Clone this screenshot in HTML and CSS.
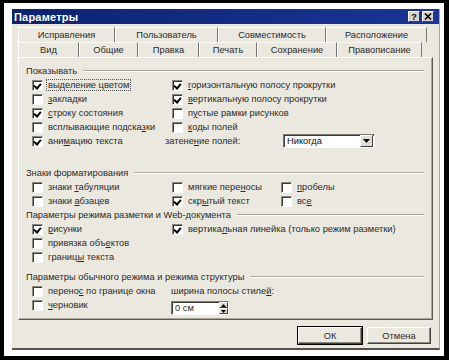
FILE: index.html
```html
<!DOCTYPE html>
<html lang="ru">
<head>
  <meta charset="UTF-8" />
  <title>Параметры</title>
  <link rel="stylesheet" href="styles.css">
</head>
<body>
  <div class="screen">
    <div class="dialog">
      <div class="titlebar">
        <span class="title">Параметры</span>
        <div class="tb-btns">
          <span class="tb-btn">?</span>
          <span class="tb-btn">
            <svg width="8" height="7" viewBox="0 0 8 7"><path d="M1 0.5 L7 6.5 M7 0.5 L1 6.5" stroke="#000" stroke-width="1.6"/></svg>
          </span>
        </div>
      </div>

      <!-- вкладки -->
      <div class="tabs">
        <div class="tab-row back">
          <span class="tab w97">Исправления</span>
          <span class="tab w103">Пользователь</span>
          <span class="tab w108">Совместимость</span>
          <span class="tab w101">Расположение</span>
        </div>
        <div class="tab-row front">
          <span class="tab active w61">Вид</span>
          <span class="tab w59">Общие</span>
          <span class="tab w61">Правка</span>
          <span class="tab w58">Печать</span>
          <span class="tab w80">Сохранение</span>
          <span class="tab w85">Правописание</span>
        </div>
      </div>

      <div class="panel">
        <div class="group-title first"><span>Показывать</span></div>
        <div class="row">
          <label class="opt col1"><i class="cb on"></i><span class="focus">выделение цветом</span></label>
          <label class="opt"><i class="cb on"></i><span><u>г</u>оризонтальную полосу прокрутки</span></label>
        </div>
        <div class="row">
          <label class="opt col1"><i class="cb"></i><span><u>з</u>акладки</span></label>
          <label class="opt"><i class="cb on"></i><span><u>в</u>ертикальную полосу прокрутки</span></label>
        </div>
        <div class="row">
          <label class="opt col1"><i class="cb on"></i><span><u>с</u>троку состояния</span></label>
          <label class="opt"><i class="cb"></i><span>п<u>у</u>стые рамки рисунков</span></label>
        </div>
        <div class="row">
          <label class="opt col1"><i class="cb"></i><span>всплывающие подска<u>з</u>ки</span></label>
          <label class="opt"><i class="cb"></i><span><u>к</u>оды полей</span></label>
        </div>
        <div class="row">
          <label class="opt col1"><i class="cb on"></i><span>ани<u>м</u>ацию текста</span></label>
          <span class="shade-label">затене<u>н</u>ие полей:</span>
          <div class="select"><span>Никогда</span><i class="drop"><svg width="7" height="4" viewBox="0 0 7 4"><path d="M0 0 H7 L3.5 4 Z" fill="#000"/></svg></i></div>
        </div>

        <div class="group-title second"><span>Знаки форматирования</span></div>
        <div class="row">
          <label class="opt col1"><i class="cb"></i><span>знаки <u>т</u>абуляции</span></label>
          <label class="opt col2"><i class="cb"></i><span>мягкие пере<u>н</u>осы</span></label>
          <label class="opt"><i class="cb"></i><span><u>п</u>робелы</span></label>
        </div>
        <div class="row">
          <label class="opt col1"><i class="cb"></i><span>знаки <u>а</u>бзацев</span></label>
          <label class="opt col2"><i class="cb on"></i><span>скр<u>ы</u>тый текст</span></label>
          <label class="opt"><i class="cb"></i><span>вс<u>е</u></span></label>
        </div>

        <div class="group-title third"><span>Параметры режима разметки и Web-документа</span></div>
        <div class="row">
          <label class="opt col1"><i class="cb on"></i><span><u>р</u>исунки</span></label>
          <label class="opt"><i class="cb on"></i><span>вертика<u>л</u>ьная линейка (только режим разметки)</span></label>
        </div>
        <div class="row">
          <label class="opt col1"><i class="cb"></i><span>привязка объ<u>е</u>ктов</span></label>
        </div>
        <div class="row">
          <label class="opt col1"><i class="cb"></i><span>границ<u>ы</u> текста</span></label>
        </div>

        <div class="group-title fourth"><span>Параметры обычного режима и режима структуры</span></div>
        <div class="row">
          <label class="opt col1"><i class="cb"></i><span>перено<u>с</u> по границе окна</span></label>
          <span class="width-label">ширина полосы стиле<u>й</u>:</span>
        </div>
        <div class="row">
          <label class="opt col1"><i class="cb"></i><span><u>ч</u>ерновик</span></label>
          <div class="spin">
            <span>0 см</span>
            <i class="spin-btns">
              <b><svg width="5" height="3" viewBox="0 0 5 3"><path d="M0 3 H5 L2.5 0 Z" fill="#000"/></svg></b>
              <b><svg width="5" height="3" viewBox="0 0 5 3"><path d="M0 0 H5 L2.5 3 Z" fill="#000"/></svg></b>
            </i>
          </div>
        </div>
      </div>

      <div class="buttons">
        <button class="btn default">ОК</button>
        <button class="btn">Отмена</button>
      </div>
    </div>
  </div>
</body>
</html>
```

FILE: styles.css
```css
body {
  margin: 0;
  background-color: #000;
  font-family: "Liberation Sans", Arial, sans-serif;
  font-size: 9.3px;
  color: #2a2a2a;
}

.screen {
  width: 428px;
  height: 341px;
  margin: 3px 0 0 4px;
  padding: 6px 4px 6px 8px;
  background-color: #fff;
}

.dialog {
  width: 428px;
  height: 341px;
  box-sizing: border-box;
  background-color: #ebe8e0;
  border-bottom: 2px solid #55534c;
  border-right: 1px solid #a9a69c;
}

/* заголовок окна */
.titlebar {
  height: 15px;
  background: linear-gradient(to right, #0b2370, #1a3596);
  display: flex;
  align-items: center;
  justify-content: space-between;
  padding: 0 5px 0 2px;
}

.title {
  color: #fff;
  font-weight: bold;
  font-size: 11px;
  letter-spacing: 0.2px;
}

.tb-btns {
  display: flex;
  gap: 2px;
}

.tb-btn {
  width: 12px;
  height: 11px;
  background-color: #d8d4cc;
  border: 1px solid;
  border-color: #fff #404040 #404040 #fff;
  box-sizing: border-box;
  display: flex;
  align-items: center;
  justify-content: center;
  font-weight: bold;
  font-size: 9px;
  color: #000;
}

/* вкладки */
.tabs {
  margin: 3px 0 0 6px;
}

.tab-row {
  display: flex;
  height: 15px;
}

.tab {
  box-sizing: border-box;
  height: 15px;
  display: flex;
  align-items: center;
  justify-content: center;
  border-top: 1px solid #fff;
  border-left: 1px solid #fff;
  border-right: 1px solid #777;
  color: #2a2a2a;
}

.tab-row.front .tab {
  border-top: 1px solid #fbfaf6;
}

.w97 { width: 97px; }
.w103 { width: 103px; }
.w108 { width: 108px; }
.w101 { width: 101px; }
.w61 { width: 61px; }
.w59 { width: 59px; }
.w58 { width: 58px; }
.w80 { width: 80px; }
.w85 { width: 85px; }

/* панель */
.panel {
  box-sizing: border-box;
  width: 415px;
  height: 263px;
  margin-left: 6px;
  padding: 6px 8px 0 7px;
  border: 1px solid;
  border-color: #fff #5c5a54 #5c5a54 #fff;
  box-shadow: inset -1px -1px 0 #a9a69c;
}

.group-title {
  height: 14px;
  display: flex;
  align-items: center;
  gap: 6px;
}

.group-title::after {
  content: "";
  flex: 1;
  height: 0;
  border-top: 1px solid #a9a69c;
  border-bottom: 1px solid #fff;
}

.group-title.second { margin-top: 18px; }
.group-title.third { margin-top: 0; }
.group-title.fourth { margin-top: 6px; }

.row {
  height: 14px;
  display: flex;
  align-items: center;
  padding-left: 6px;
}

.opt {
  display: flex;
  align-items: center;
  gap: 5px;
}

.col1 { width: 140px; }
.col2 { width: 109px; }

.cb {
  width: 11px;
  height: 11px;
  box-sizing: border-box;
  background-color: #fff;
  border: 1px solid;
  border-color: #8a877f #fff #fff #8a877f;
  box-shadow: inset 1px 1px 0 #3c3a36;
  position: relative;
  flex: none;
}

.cb.on::after {
  content: "";
  position: absolute;
  left: 2px;
  top: 1px;
  width: 3px;
  height: 5px;
  border: solid #000;
  border-width: 0 2px 2px 0;
  transform: rotate(40deg);
}

.focus {
  outline: 1px dotted #555;
  padding: 0 1px;
  margin-left: -1px;
}

u {
  text-decoration: underline;
}

.shade-label {
  width: 118px;
  margin-left: -7px;
}

.select {
  width: 92px;
  height: 14px;
  box-sizing: border-box;
  background-color: #fff;
  border: 1px solid;
  border-color: #7d7a72 #fff #fff #7d7a72;
  box-shadow: inset 1px 1px 0 #3c3a36;
  display: flex;
  align-items: center;
  justify-content: space-between;
  padding-left: 3px;
  color: #111;
}

.drop {
  width: 11px;
  height: 10px;
  margin-right: 1px;
  background-color: #e2dfd6;
  border: 1px solid;
  border-color: #fff #404040 #404040 #fff;
  display: flex;
  align-items: center;
  justify-content: center;
}

.width-label {
  margin-left: -1px;
}

.spin {
  width: 58px;
  height: 14px;
  box-sizing: border-box;
  margin-top: 6px;
  margin-left: -1px;
  background-color: #fff;
  border: 1px solid;
  border-color: #7d7a72 #fff #fff #7d7a72;
  box-shadow: inset 1px 1px 0 #3c3a36;
  display: flex;
  align-items: center;
  justify-content: space-between;
  padding-left: 3px;
}

.spin-btns {
  display: flex;
  flex-direction: column;
  width: 9px;
  height: 12px;
}

.spin-btns b {
  flex: 1;
  background-color: #e2dfd6;
  border: 1px solid;
  border-color: #fff #404040 #404040 #fff;
  display: flex;
  align-items: center;
  justify-content: center;
}

/* кнопки */
.buttons {
  display: flex;
  justify-content: flex-end;
  gap: 5px;
  margin: 7px 8px 0 0;
}

.btn {
  width: 64px;
  height: 17px;
  padding: 0;
  font-family: "Liberation Sans", Arial, sans-serif;
  font-size: 9.3px;
  color: #2a2a2a;
  background-color: #ebe8e0;
  border: 1px solid;
  border-color: #fff #404040 #404040 #fff;
  box-shadow: inset -1px -1px 0 #8a877f;
}

.btn.default {
  outline: 1px solid #000;
}
```
